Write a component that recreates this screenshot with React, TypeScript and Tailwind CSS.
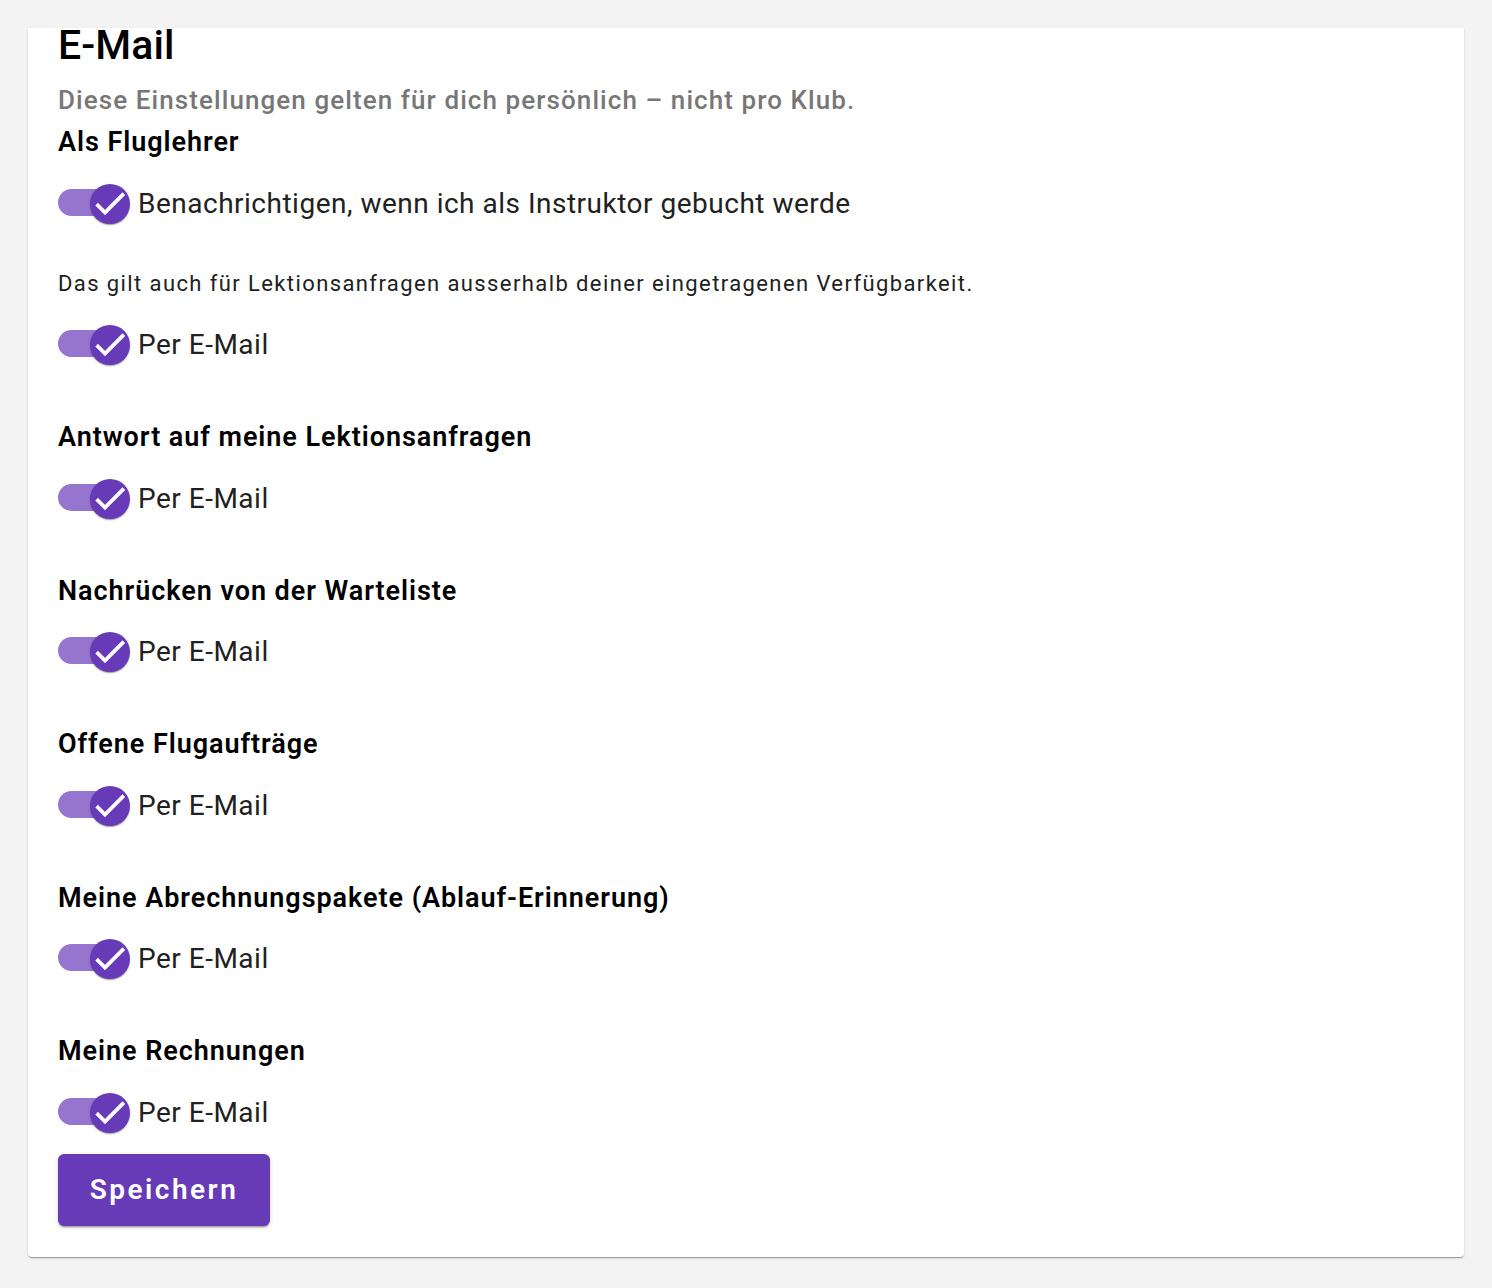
import React from "react";

const font = { fontFamily: "Roboto, 'Noto Sans', Arial, sans-serif" };

function Toggle({ label }: { label: string }) {
  return (
    <div className="flex h-[40px] items-center">
      <div className="relative h-[40px] w-[72px] shrink-0">
        <div className="absolute left-0 top-[5px] h-[27px] w-[64px] rounded-full bg-[#9575cd]" />
        <div className="absolute left-[32px] top-0 flex h-[40px] w-[40px] items-center justify-center rounded-full bg-[#673ab7] shadow-[0_2px_1px_-1px_rgba(0,0,0,0.2),0_1px_1px_0_rgba(0,0,0,0.14),0_1px_3px_0_rgba(0,0,0,0.12)]">
          <svg width="40" height="40" viewBox="0 0 40 40" fill="none">
            <polyline
              points="8,21.5 15,28.5 32.5,11"
              stroke="#ffffff"
              strokeWidth="3.8"
              strokeLinecap="square"
              strokeLinejoin="miter"
            />
          </svg>
        </div>
      </div>
      <span className="ml-[8px] text-[28px] leading-[32px] text-[#212121] tracking-[0.5px]">{label}</span>
    </div>
  );
}

function Section({ title }: { title: string }) {
  return (
    <>
      <h3 className="mt-[56px] text-[27px] font-semibold leading-[32px] tracking-[0.95px] text-black">{title}</h3>
      <div className="mt-[25.5px]">
        <Toggle label="Per E-Mail" />
      </div>
    </>
  );
}

export default function App() {
  const sections = [
    "Antwort auf meine Lektionsanfragen",
    "Nachrücken von der Warteliste",
    "Offene Flugaufträge",
    "Meine Abrechnungspakete (Ablauf-Erinnerung)",
    "Meine Rechnungen",
  ];
  return (
    <div className="min-h-[1288px] bg-[#f3f3f3] px-[28px] pt-[28px] pb-[32px]" style={font}>
      <div className="flex flex-col rounded-b-[4px] bg-white px-[30px] pt-px pb-[31px] shadow-[0_2px_1px_-1px_rgba(0,0,0,0.2),0_1px_1px_0_rgba(0,0,0,0.14),0_1px_3px_0_rgba(0,0,0,0.12)]">
        <h1 className="text-[41px] font-medium leading-[32px] tracking-[0.1px] text-black">E-Mail</h1>
        <p className="mt-[23px] text-[26px] font-medium leading-[32px] tracking-[1.08px] text-[#777777]">
          Diese Einstellungen gelten für dich persönlich – nicht pro Klub.
        </p>
        <h3 className="mt-[10px] text-[27px] font-semibold leading-[32px] tracking-[0.95px] text-black">Als Fluglehrer</h3>
        <div className="mt-[26px]">
          <Toggle label="Benachrichtigen, wenn ich als Instruktor gebucht werde" />
        </div>
        <p className="mt-[46px] text-[22px] leading-[28px] text-[#212121] tracking-[1.4px]">
          Das gilt auch für Lektionsanfragen ausserhalb deiner eingetragenen Verfügbarkeit.
        </p>
        <div className="mt-[27px]">
          <Toggle label="Per E-Mail" />
        </div>
        {sections.map((s) => (
          <Section key={s} title={s} />
        ))}
        <div className="mt-[21px]">
          <button className="h-[72px] w-[212px] rounded-[6px] bg-[#673ab7] text-[28px] font-semibold tracking-[2.5px] text-white shadow-[0_3px_1px_-2px_rgba(0,0,0,0.2),0_2px_2px_0_rgba(0,0,0,0.14),0_1px_5px_0_rgba(0,0,0,0.12)]">
            Speichern
          </button>
        </div>
      </div>
    </div>
  );
}
